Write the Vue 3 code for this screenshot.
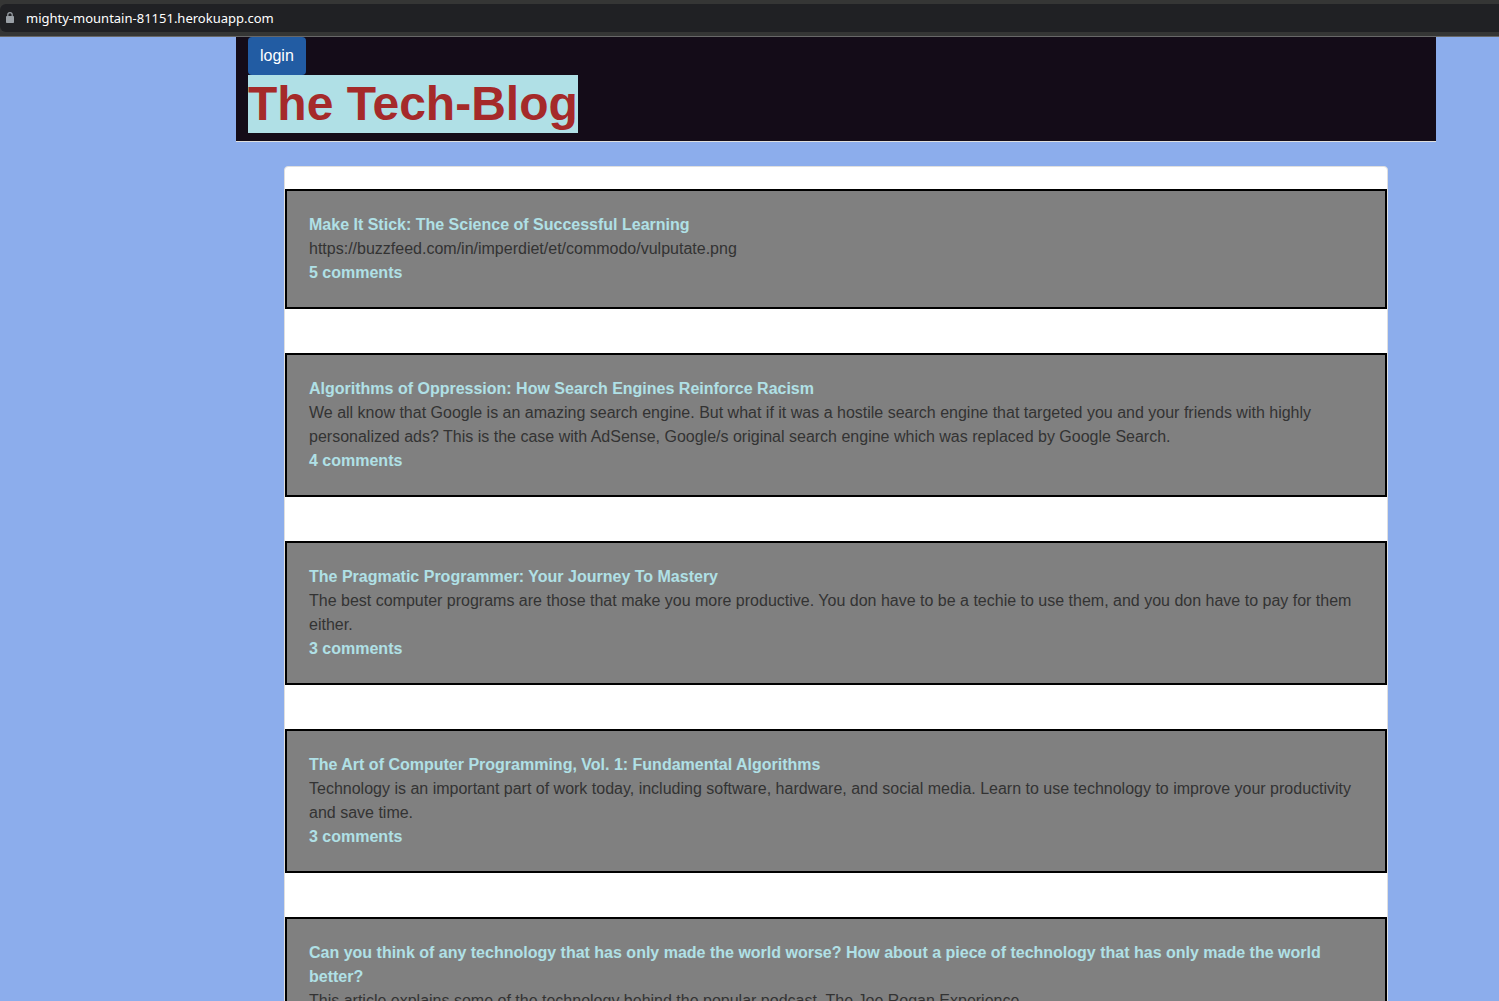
<script setup>
const posts = [
  {
    title: 'Make It Stick: The Science of Successful Learning',
    body: 'https://buzzfeed.com/in/imperdiet/et/commodo/vulputate.png',
    comments: 5,
  },
  {
    title: 'Algorithms of Oppression: How Search Engines Reinforce Racism',
    body: 'We all know that Google is an amazing search engine. But what if it was a hostile search engine that targeted you and your friends with highly personalized ads? This is the case with AdSense, Google/s original search engine which was replaced by Google Search.',
    comments: 4,
  },
  {
    title: 'The Pragmatic Programmer: Your Journey To Mastery',
    body: 'The best computer programs are those that make you more productive. You don have to be a techie to use them, and you don have to pay for them either.',
    comments: 3,
  },
  {
    title: 'The Art of Computer Programming, Vol. 1: Fundamental Algorithms',
    body: 'Technology is an important part of work today, including software, hardware, and social media. Learn to use technology to improve your productivity and save time.',
    comments: 3,
  },
  {
    title: 'Can you think of any technology that has only made the world worse? How about a piece of technology that has only made the world better?',
    body: 'This article explains some of the technology behind the popular podcast, The Joe Rogan Experience.',
    comments: 3,
  },
]
</script>

<template>
  <div class="browser">
    <div class="toolbar">
      <div class="address">
        <svg class="lock" width="8" height="12" viewBox="0 0 8 12" aria-hidden="true">
          <path d="M1.8 5V2.8a2.2 2.2 0 0 1 4.4 0V5" fill="none" stroke="#9aa0a6" stroke-width="1.2" />
          <rect x="0" y="4" width="8" height="7" rx="0.8" fill="#9aa0a6" />
        </svg>
        <span>mighty-mountain-81151.herokuapp.com</span>
      </div>
    </div>

    <div class="page">
      <div class="container">
        <header class="header">
          <button class="login" type="button">login</button>
          <h1><a href="#">The Tech-Blog</a></h1>
        </header>

        <main class="main">
          <section class="card">
            <article v-for="post in posts" :key="post.title" class="post">
              <h2><a href="#">{{ post.title }}</a></h2>
              <p>{{ post.body }}</p>
              <a class="comments" href="#">{{ post.comments }} comments</a>
            </article>
          </section>
        </main>
      </div>
    </div>
  </div>
</template>

<style>
body {
  margin: 0;
  background: #8cadec;
}
</style>

<style scoped>
* {
  box-sizing: border-box;
}

.browser {
  display: flex;
  flex-direction: column;
  height: 100vh;
  overflow: hidden;
  font: 16px/24px "Liberation Sans", Arial, sans-serif;
  color: #333333;
}

.toolbar {
  flex: none;
  padding: 4px 0;
  background: #353635;
  border-bottom: 1px solid #686868;
}

.address {
  display: flex;
  align-items: center;
  gap: 12px;
  height: 28px;
  padding-left: 6px;
  background: #202124;
  border-radius: 6px 0 0 6px;
  color: #ffffff;
  font: 13px/28px "Noto Sans", "Open Sans", sans-serif;
}

.page {
  flex: 1;
  min-height: 0;
  overflow: hidden;
  padding: 0 63px 0 236px;
  background: #8cadec;
}

.container {
  max-width: 1200px;
}

.header {
  padding: 0 12px 8px;
  background: #140c18;
  border-bottom: 1px solid #dfdfdf;
}

.login {
  display: block;
  padding: 7px 12px;
  border: 0;
  border-radius: 4px;
  background: #225ca3;
  color: #ffffff;
  font: inherit;
}

h1 {
  margin: 0;
  width: fit-content;
  background: #b0e0e6;
  font-size: 48px;
  line-height: 58px;
}

h1 a {
  color: #a52a2a;
  text-decoration: none;
}

.main {
  padding: 24px 48px;
}

.card {
  display: flex;
  flex-direction: column;
  gap: 44px;
  padding: 22px 0;
  border: 1px solid #dfdfdf;
  border-radius: 4px;
  background: #ffffff;
}

.post {
  padding: 22px;
  border: 2px solid #000000;
  background: #808080;
}

h2,
p {
  margin: 0;
  font-size: 16px;
}

.post a {
  color: #b0e0e6;
  font-weight: bold;
  text-decoration: none;
}
</style>
